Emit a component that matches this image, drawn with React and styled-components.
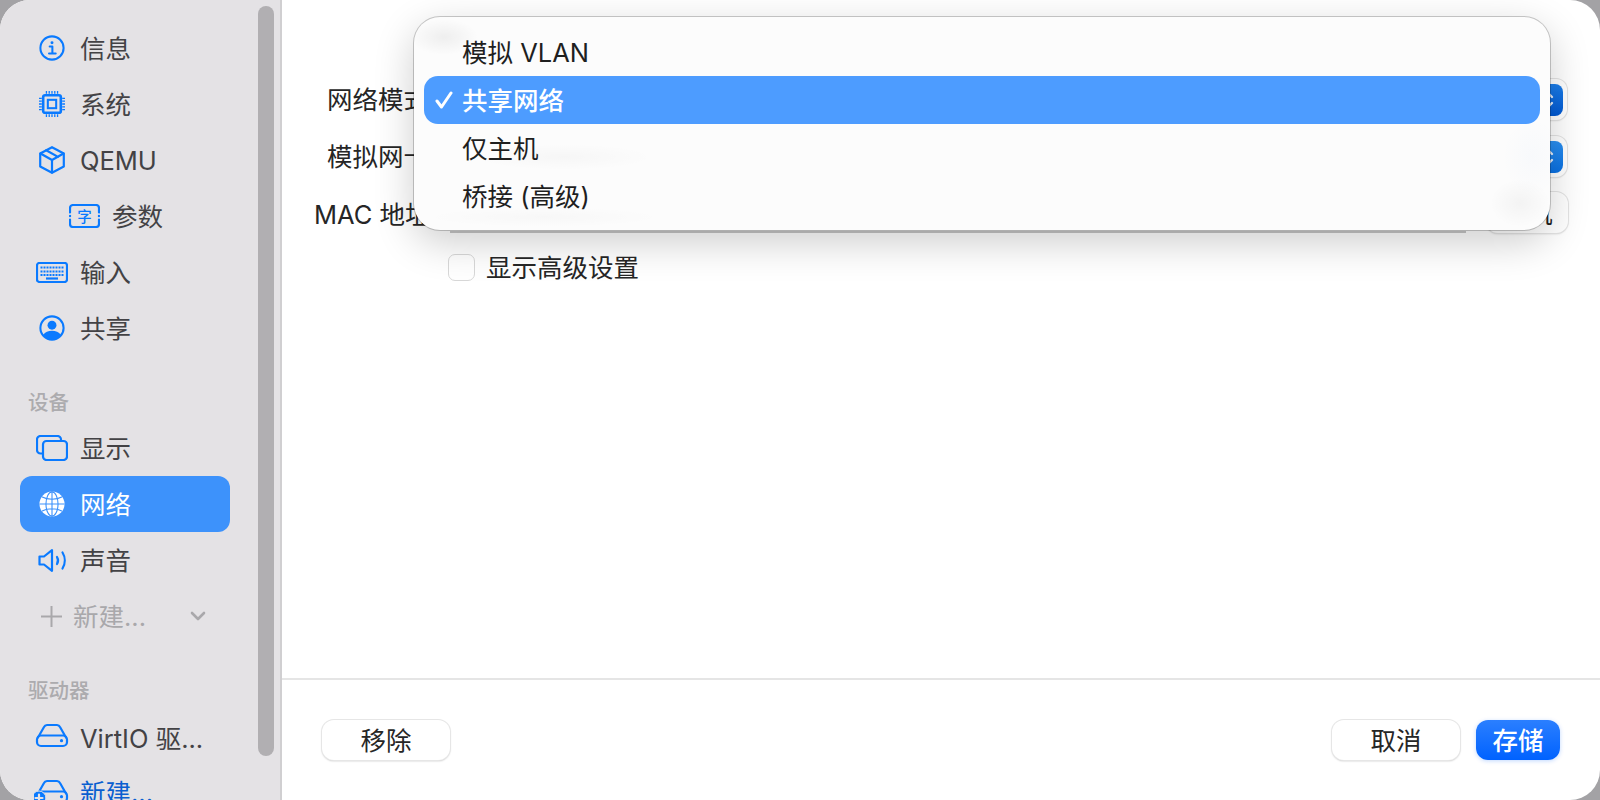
import React from "react";
import styled, { createGlobalStyle } from "styled-components";

const Global = createGlobalStyle`
  html, body {
    margin: 0;
    height: 100%;
    background: #a3a2a5;
    overflow: hidden;
    font-family: Inter, "Noto Sans CJK SC", sans-serif;
  }
`;

const Window = styled.div`
  position: relative;
  width: 1600px;
  height: 800px;
  display: flex;
  overflow: hidden;
  border-radius: 30px;
  background: #fff;
`;

const Sidebar = styled.aside`
  position: relative;
  flex: 0 0 282px;
  height: 800px;
  box-sizing: border-box;
  padding: 20px 20px 0;
  overflow: hidden;
  background: #e4e2e5;
  border-right: 2px solid #d0cfd1;
`;

const ScrollThumb = styled.div`
  position: absolute;
  top: 6px;
  left: 258px;
  width: 16px;
  height: 750px;
  border-radius: 8px;
  background: #b1afb2;
`;

const Row = styled.div`
  display: flex;
  align-items: center;
  width: 210px;
  height: 56px;
  box-sizing: border-box;
  padding-left: ${(p) => (p.$indent ? "48px" : "16px")};
  border-radius: 12px;
  font-size: 25.5px;
  white-space: nowrap;
  color: ${(p) => (p.$selected ? "#fff" : p.$dim ? "#a9a8ab" : p.$link ? "#0a5fd0" : "#434245")};
  background: ${(p) => (p.$selected ? "#3d92fb" : "transparent")};
`;

const RowLabel = styled.span`
  padding-bottom: ${(p) => (p.$latin ? 0 : 3)}px;
`;

const RowIcon = styled.span`
  flex: 0 0 32px;
  min-width: 0;
  height: 32px;
  margin-right: 12px;
  display: flex;
  align-items: center;
  justify-content: center;
  color: ${(p) => (p.$selected ? "#fff" : "#0a7aff")};

  svg {
    flex: none;
  }
`;

const SectionTitle = styled.div`
  height: 34px;
  margin-top: 29px;
  margin-bottom: 1px;
  padding: 0 0 2px 8px;
  box-sizing: border-box;
  display: flex;
  align-items: center;
  font-size: 20.5px;
  font-weight: 500;
  color: #acabae;
`;

const AddRow = styled(Row)`
  justify-content: space-between;
  padding: 0 24px 0 21px;
`;

const AddLabel = styled.span`
  display: flex;
  align-items: center;
  gap: 11px;
`;

const Main = styled.main`
  flex: 1;
  display: flex;
  flex-direction: column;
  min-width: 0;
`;

const Form = styled.div`
  flex: 1;
  display: flex;
  flex-direction: column;
  padding: 79px 33px 0 32px;
`;

const FormRow = styled.div`
  display: flex;
  align-items: center;
  height: ${(p) => p.$h || 41}px;
  margin-bottom: ${(p) => p.$mb || 0}px;
`;

const Label = styled.label`
  flex: 0 0 115px;
  margin-right: 19px;
  padding-bottom: ${(p) => (p.$latin ? 0 : 4)}px;
  text-align: right;
  font-size: 25.5px;
  color: #262626;
  white-space: nowrap;
  direction: rtl;
`;

const SelectBox = styled.div`
  flex: 1;
  height: 41px;
  display: flex;
  align-items: center;
  justify-content: space-between;
  box-sizing: border-box;
  padding: 0 4px 0 14px;
  border-radius: 11px;
  background: #fff;
  box-shadow: 0 0 0 1px #e4e4e4, 0 1px 2px rgba(0, 0, 0, 0.12);
  font-size: 25.5px;
  color: #262626;
`;

const Stepper = styled.span`
  width: 32px;
  height: 32px;
  display: flex;
  align-items: center;
  justify-content: center;
  border-radius: 8px;
  background: ${(p) =>
    p.$dark ? "linear-gradient(#1c7eea, #0058d2)" : "linear-gradient(#2a8ff0, #0a70e2)"};
`;

const TextField = styled.div`
  flex: 1;
  height: 41px;
  margin-right: 20px;
  display: flex;
  align-items: center;
  box-sizing: border-box;
  padding: 0 4px;
  border-bottom: 2px solid #c6c6c6;
  font-size: 25.5px;
  color: #262626;
`;

const SmallButton = styled.div`
  flex: 0 0 82px;
  margin-right: -1px;
  height: 41px;
  display: flex;
  align-items: center;
  justify-content: center;
  box-sizing: border-box;
  padding-bottom: 3px;
  border-radius: 12px;
  background: #fff;
  box-shadow: 0 0 0 1px #e4e4e4, 0 1px 2px rgba(0, 0, 0, 0.18);
  font-size: 25.5px;
  color: #222;
`;

const CheckRow = styled.div`
  display: flex;
  align-items: center;
  gap: 11px;
  margin-left: 134px;
  margin-top: 20px;
  height: 28px;
  font-size: 25.5px;
  color: #262626;
`;

const CheckText = styled.span`
  padding-bottom: 3px;
`;

const CheckBox = styled.span`
  width: 27px;
  height: 27px;
  box-sizing: border-box;
  border-radius: 7px;
  background: #fff;
  border: 1.5px solid #d8d8d8;
`;

const Footer = styled.footer`
  flex: 0 0 122px;
  display: flex;
  align-items: center;
  box-sizing: border-box;
  padding: 0 40px;
  gap: 16px;
  border-top: 2px solid #e5e5e5;
`;

const FootButton = styled.button`
  width: ${(p) => (p.$primary ? 84 : 128)}px;
  height: 40px;
  padding: 0 0 7px;
  border: none;
  border-radius: 12px;
  font: inherit;
  font-size: 25.5px;
  font-weight: ${(p) => (p.$primary ? 500 : 400)};
  color: ${(p) => (p.$primary ? "#fff" : "#262626")};
  background: ${(p) => (p.$primary ? "linear-gradient(#2b7fff, #0062ff)" : "#fff")};
  box-shadow: ${(p) =>
    p.$primary
      ? "0 1px 4px rgba(0, 98, 255, 0.25)"
      : "0 0 0 1px #e6e6e6, 0 1px 2px rgba(0, 0, 0, 0.28)"};
`;

const Spacer = styled.div`
  flex: 1;
`;

/* the blurred shapes of what lies under the menu */
const Menu = styled.div`
  position: absolute;
  left: 414px;
  top: 17px;
  width: 1136px;
  height: 213px;
  box-sizing: border-box;
  padding: 11px 10px;
  border-radius: 26px;
  background:
    radial-gradient(ellipse 34px 18px at 30px 20px, rgba(0, 0, 0, 0.055), transparent),
    radial-gradient(ellipse 90px 13px at 150px 140px, rgba(0, 0, 0, 0.025), transparent),
    radial-gradient(ellipse 120px 10px at 130px 200px, rgba(0, 0, 0, 0.02), transparent),
    radial-gradient(ellipse 30px 24px at 1106px 186px, rgba(0, 0, 0, 0.035), transparent),
    radial-gradient(ellipse 30px 40px at 1118px 140px, rgba(30, 110, 230, 0.02), transparent),
    #fcfcfc;
  box-shadow: 0 0 0 1px rgba(0, 0, 0, 0.2), 0 12px 40px rgba(0, 0, 0, 0.2);
`;

const MenuItem = styled.div`
  position: relative;
  height: 48px;
  display: flex;
  align-items: center;
  box-sizing: border-box;
  padding: 0 0 4px 38px;
  border-radius: 14px;
  font-size: 25.5px;
  color: ${(p) => (p.$active ? "#fff" : "#1f1f1f")};
  font-weight: ${(p) => (p.$active ? 500 : 400)};
  background: ${(p) => (p.$active ? "#4d9cff" : "transparent")};
`;

const Check = styled.svg`
  position: absolute;
  left: 11px;
  top: 15px;
`;

const stroke = { fill: "none", stroke: "currentColor", strokeWidth: 2.2, strokeLinecap: "round", strokeLinejoin: "round" };

const InfoIcon = () => (
  <svg width="26" height="26" viewBox="0 0 28 28" {...stroke}>
    <circle cx="14" cy="14" r="12.500" />
    <circle cx="14" cy="8.400" r="1.600" fill="currentColor" stroke="none" />
    <path d="M11.500 12.400H14.400V19.800M10.800 20H18" />
  </svg>
);

const ChipIcon = () => (
  <svg width="26" height="26" viewBox="0 0 28 28" {...stroke}>
    <rect x="4.500" y="4.500" width="19" height="19" rx="2" strokeWidth="2.800" />
    <rect x="9.500" y="9.500" width="9" height="9" strokeWidth="2.200" strokeLinejoin="miter" />
    <path strokeWidth="1.400" strokeLinecap="butt" d="M8 0v3M11 0v3M14 0v3M17 0v3M20 0v3M8 25v3M11 25v3M14 25v3M17 25v3M20 25v3M0 8h3M0 11h3M0 14h3M0 17h3M0 20h3M25 8h3M25 11h3M25 14h3M25 17h3M25 20h3" />
  </svg>
);

const BoxIcon = () => (
  <svg width="26" height="28" viewBox="0 0 26 28" {...stroke}>
    <path d="M13 1.200 24.800 7.500v13L13 26.800 1.200 20.500v-13z" />
    <path d="M1.500 7.500 13 14l11.500-6.500M13 14v12.500M7.200 4.200l11.800 6.700" />
  </svg>
);

const ParamIcon = () => (
  <svg width="31" height="24" viewBox="0 0 31 24" {...stroke}>
    <path d="M1 8.500V4a3 3 0 0 1 3-3h23a3 3 0 0 1 3 3v4.500M1 15.500V20a3 3 0 0 0 3 3h23a3 3 0 0 0 3-3v-4.500" />
    <circle cx="1" cy="12" r="1.200" fill="currentColor" stroke="none" />
    <circle cx="30" cy="12" r="1.200" fill="currentColor" stroke="none" />
    <text x="15.500" y="18" textAnchor="middle" fontSize="14.500" fill="currentColor" stroke="none" fontWeight="500" fontFamily="'Noto Sans CJK SC', sans-serif">字</text>
  </svg>
);

const KeyboardIcon = () => (
  <svg width="32" height="21" viewBox="0 0 32 21" {...stroke}>
    <rect x="1" y="1" width="30" height="19" rx="2.500" />
    <path strokeWidth="2" strokeLinecap="butt" strokeDasharray="2 1" d="M4.500 5.500h23M4.500 9.500h23M4.500 13h23" />
    <path strokeLinecap="butt" d="M10 16.500h12" />
  </svg>
);

const UserIcon = () => (
  <svg width="26" height="26" viewBox="0 0 28 28" {...stroke}>
    <circle cx="14" cy="14" r="12.500" />
    <circle cx="14" cy="11" r="4.800" fill="currentColor" stroke="none" />
    <path d="M4.500 21.500c2-3.400 5.600-4.500 9.500-4.500s7.500 1.100 9.500 4.500c-2.200 3.200-5.600 5.500-9.500 5.500s-7.300-2.300-9.500-5.500z" fill="currentColor" stroke="none" />
  </svg>
);

const DisplayIcon = () => (
  <svg width="32" height="26" viewBox="0 0 32 26" {...stroke}>
    <path d="M6.500 18.500h-2a3.500 3.500 0 0 1-3.500-3.500V4.500A3.500 3.500 0 0 1 4.500 1h17A3.500 3.500 0 0 1 25 4.500V6" />
    <rect x="7" y="6" width="24" height="19" rx="3.500" />
  </svg>
);

const GlobeIcon = () => (
  <svg width="26" height="26" viewBox="0 0 28 28" {...stroke} strokeWidth="1.200">
    <circle cx="14" cy="14" r="13.500" fill="currentColor" stroke="none" />
    <g stroke="#3d92fb">
      <ellipse cx="14" cy="14" rx="6.500" ry="13" />
      <path d="M14 1v26M1 14h26M3.500 6.500c5.500 3.200 15.500 3.200 21 0M3.500 21.500c5.500-3.200 15.500-3.200 21 0" />
    </g>
  </svg>
);

const SpeakerIcon = () => (
  <svg width="29" height="23" viewBox="0 0 29 23" {...stroke}>
    <path d="M1.500 7.500h4.500L14 1.200v20.600L6 15.500H1.500z" />
    <path d="M19 8c1.300 2.200 1.300 4.800 0 7M24.500 3.500c3 4.800 3 11.200 0 16" />
  </svg>
);

const DriveIcon = ({ plus }) => (
  <svg width="36" height="30" viewBox="0 -2.500 36 30" {...stroke}>
    <path d="M4 14 10 3.500A3.500 3.500 0 0 1 13 1.500h10a3.500 3.500 0 0 1 3 2L32 14" />
    <rect x="3" y="12" width="30" height="10.500" rx="4" />
    <circle cx="27.500" cy="17.200" r="1.600" fill="currentColor" stroke="none" />
    {plus && <circle cx="5" cy="18.500" r="7" fill="currentColor" stroke="#e4e2e5" strokeWidth="1" />}
    {plus && <path stroke="#e4e2e5" d="M1.500 18.500h7M5 15v7" />}
  </svg>
);

const Chevrons = () => (
  <svg width="16" height="24" viewBox="0 0 16 24" fill="none" stroke="#e4eefb" strokeWidth="2.400" strokeLinecap="round" strokeLinejoin="round">
    <path d="M3 9l5-5 5 5M3 15l5 5 5-5" />
  </svg>
);

const PlusIcon = () => (
  <svg width="21" height="21" viewBox="0 0 21 21" fill="none" stroke="currentColor" strokeWidth="2">
    <path d="M10.500 0v21M0 10.500h21" />
  </svg>
);

const ChevronDown = () => (
  <svg width="16" height="10" viewBox="0 0 16 10" fill="none" stroke="currentColor" strokeWidth="2.600" strokeLinecap="round" strokeLinejoin="round">
    <path d="M2 2l6 6 6-6" />
  </svg>
);

const topItems = [
  { label: "信息", icon: <InfoIcon /> },
  { label: "系统", icon: <ChipIcon /> },
  { label: "QEMU", icon: <BoxIcon />, latin: true },
  { label: "参数", icon: <ParamIcon />, indent: true },
  { label: "输入", icon: <KeyboardIcon /> },
  { label: "共享", icon: <UserIcon /> },
];

const menuItems = ["模拟 VLAN", "共享网络", "仅主机", "桥接 (高级)"];

export default function App() {
  return (
    <Window>
      <Global />
      <Sidebar>
        {topItems.map((item) => (
          <Row key={item.label} $indent={item.indent}>
            <RowIcon>{item.icon}</RowIcon>
            <RowLabel $latin={item.latin}>{item.label}</RowLabel>
          </Row>
        ))}
        <SectionTitle>设备</SectionTitle>
        <Row>
          <RowIcon><DisplayIcon /></RowIcon><RowLabel>显示</RowLabel>
        </Row>
        <Row $selected>
          <RowIcon $selected><GlobeIcon /></RowIcon><RowLabel>网络</RowLabel>
        </Row>
        <Row>
          <RowIcon><SpeakerIcon /></RowIcon><RowLabel>声音</RowLabel>
        </Row>
        <AddRow $dim>
          <AddLabel><PlusIcon /><RowLabel>新建...</RowLabel></AddLabel>
          <ChevronDown />
        </AddRow>
        <SectionTitle>驱动器</SectionTitle>
        <Row>
          <RowIcon><DriveIcon /></RowIcon><RowLabel $latin>VirtIO 驱...</RowLabel>
        </Row>
        <Row $link>
          <RowIcon><DriveIcon plus /></RowIcon><RowLabel>新建...</RowLabel>
        </Row>
        <ScrollThumb />
      </Sidebar>
      <Main>
        <Form>
          <FormRow $mb={16}>
            <Label>网络模式</Label>
            <SelectBox>共享网络<Stepper $dark><Chevrons /></Stepper></SelectBox>
          </FormRow>
          <FormRow $mb={15}>
            <Label>模拟网卡</Label>
            <SelectBox>virtio-net-pci<Stepper><Chevrons /></Stepper></SelectBox>
          </FormRow>
          <FormRow>
            <Label $latin>MAC 地址</Label>
            <TextField>52:54:00:12:34:56</TextField>
            <SmallButton>随机</SmallButton>
          </FormRow>
          <CheckRow>
            <CheckBox /><CheckText>显示高级设置</CheckText>
          </CheckRow>
        </Form>
        <Footer>
          <FootButton>移除</FootButton>
          <Spacer />
          <FootButton>取消</FootButton>
          <FootButton $primary>存储</FootButton>
        </Footer>
      </Main>
      <Menu>
        <MenuItem>{menuItems[0]}</MenuItem>
        <MenuItem $active>
          <Check width="18" height="18" viewBox="0 0 18 18" fill="none" stroke="#fff" strokeWidth="3" strokeLinecap="round" strokeLinejoin="round">
            <path d="M2 10l4.500 6L16 2" />
          </Check>
          {menuItems[1]}
        </MenuItem>
        <MenuItem>{menuItems[2]}</MenuItem>
        <MenuItem>{menuItems[3]}</MenuItem>
      </Menu>
    </Window>
  );
}
